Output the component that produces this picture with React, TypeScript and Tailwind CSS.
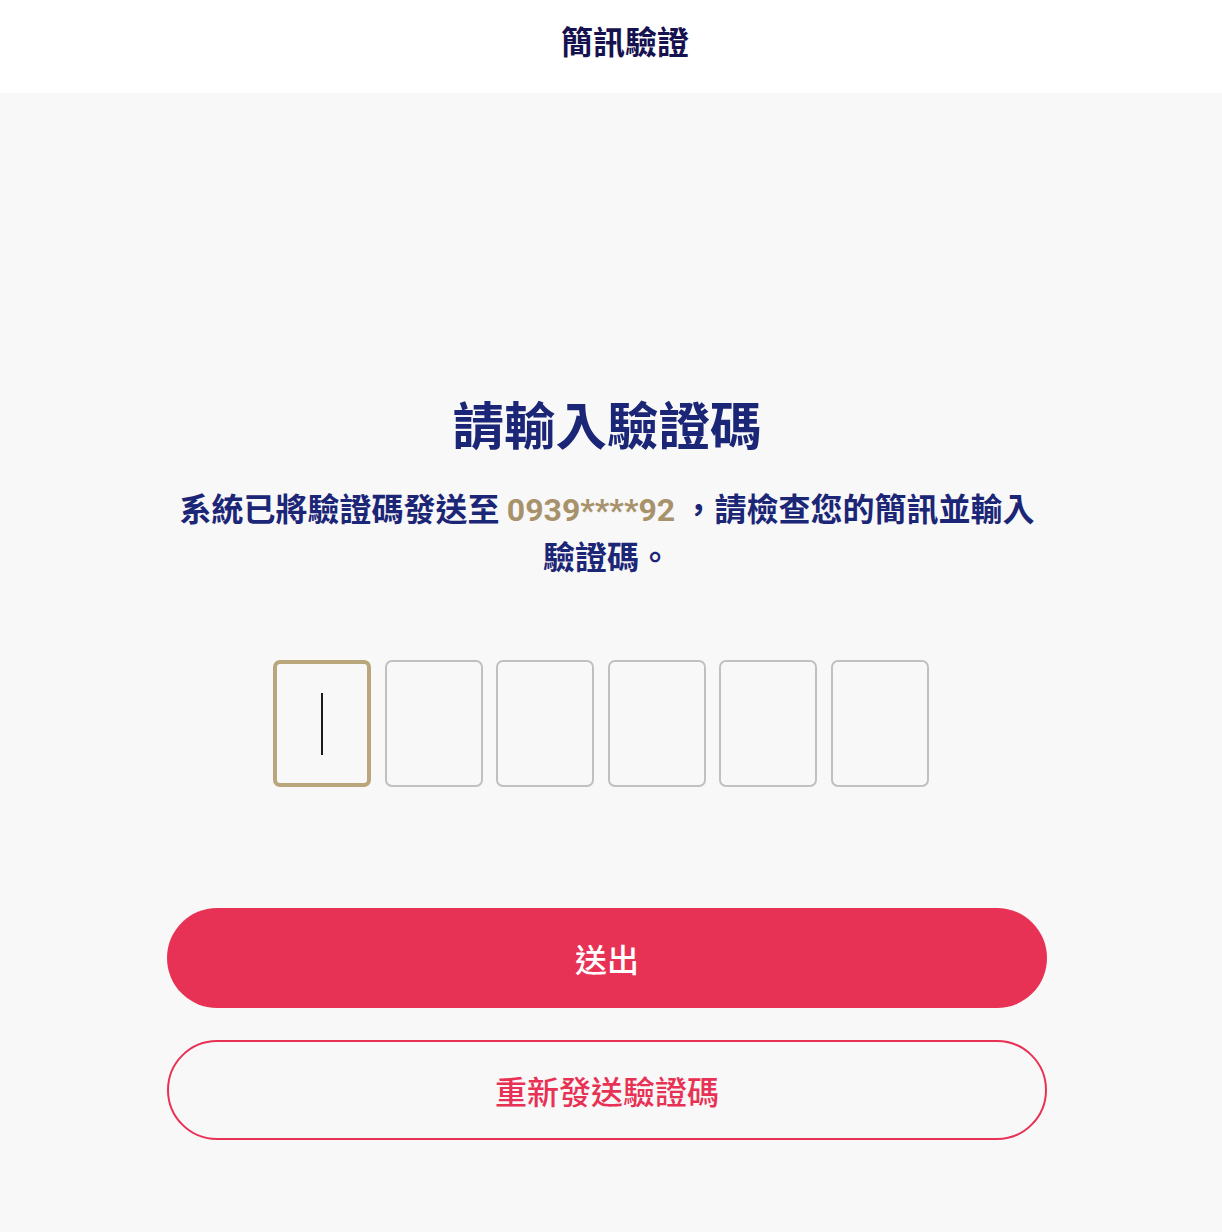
import React from "react";

const font = { fontFamily: '"Noto Sans CJK TC", "Noto Sans", sans-serif' };

export default function App() {
  return (
    <div className="min-h-[1232px] w-full bg-[#f8f8f8]" style={font}>
      <header className="flex h-[93px] items-center justify-center bg-white pb-[14px] pl-[28px]">
        <h1 className="text-[32px] font-bold leading-none text-[#16124f]">簡訊驗證</h1>
      </header>
      <main className="flex flex-col items-center pr-[8px] pt-[300px]">
        <h2 className="text-[51.5px] font-bold leading-[60px] text-[#1c2677]">請輸入驗證碼</h2>
        <p className="mt-[32px] w-[880px] text-center text-[32px] font-bold leading-[45px] text-[#1c2677]">
          系統已將驗證碼發送至{" "}
          <span className="text-[#a8926c]" style={{ fontFamily: 'Roboto, "Noto Sans", sans-serif' }}>
            0939****92
          </span>{" "}
          ，請檢查您的簡訊並輸入驗證碼。
        </p>
        <div className="mt-[82px] flex gap-[13.6px] pr-[12px]">
          <div className="flex h-[127px] w-[98px] items-center justify-center rounded-[7px] border-[4px] border-[#b9a67b]">
            <div className="h-[62px] w-[2px] bg-[#1a1a1a]" />
          </div>
          {[0, 1, 2, 3, 4].map((i) => (
            <div key={i} className="h-[127px] w-[98px] rounded-[7px] border-2 border-[#c0c0c0]" />
          ))}
        </div>
        <button className="mt-[121px] flex h-[100px] w-[880px] items-center justify-center rounded-full bg-[#e83255] text-[32px] font-medium text-white">
          送出
        </button>
        <button className="mt-[32px] flex h-[100px] w-[880px] items-center justify-center rounded-full border-2 border-[#e83255] text-[32px] font-medium text-[#e83255]">
          重新發送驗證碼
        </button>
      </main>
    </div>
  );
}
